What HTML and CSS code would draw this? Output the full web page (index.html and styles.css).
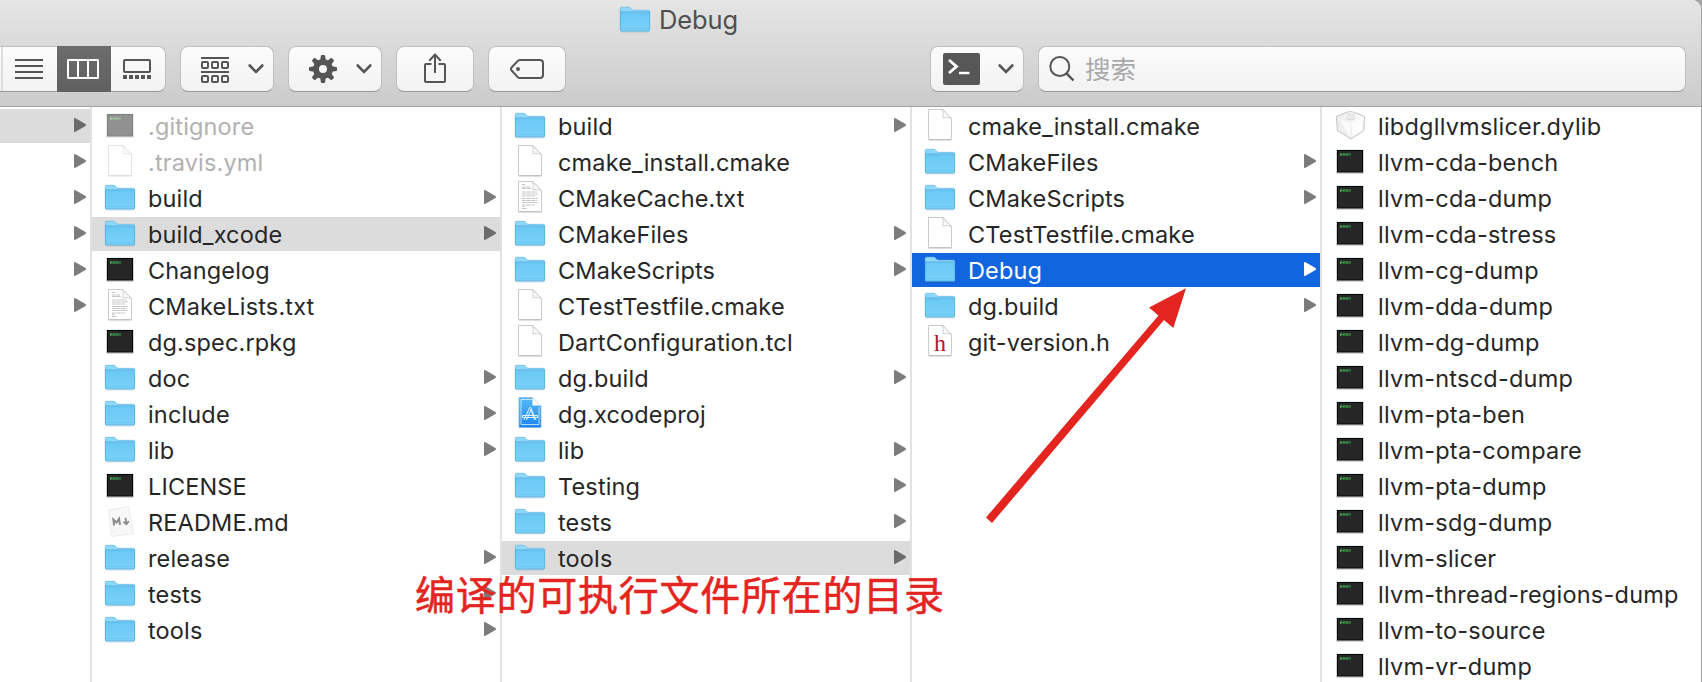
FILE: index.html
```html
<!DOCTYPE html>
<html lang="zh-CN">
<head>
<meta charset="utf-8">
<title>Debug</title>
<link rel="stylesheet" href="styles.css">
</head>
<body>
<svg class="defs" width="0" height="0" aria-hidden="true">
  <defs>
    <linearGradient id="gFolder" x1="0" y1="0" x2="0" y2="1"><stop offset="0" stop-color="#69c7f5"/><stop offset="1" stop-color="#7bd2f9"/></linearGradient>
    <linearGradient id="gXcode" x1="0" y1="0" x2="0" y2="1"><stop offset="0" stop-color="#55bbf5"/><stop offset="1" stop-color="#1b82f2"/></linearGradient>
    <linearGradient id="gCube" x1="0" y1="0" x2="1" y2="0"><stop offset="0" stop-color="#ececec"/><stop offset="1" stop-color="#fafafa"/></linearGradient>
  </defs>
  <symbol id="folder" viewBox="0 0 32 34">
    <path d="M2 28.500h28v1H2z" fill="#000" opacity=".13"/>
    <path d="M1 6q0-2 1.500-2h7.500q1 0 1.700 1.200T14 7h15.500q1.500 0 1.500 1.500V27H1z" fill="#8fd7fb"/>
    <path d="M1.300 9V5.500q0-1.200 1.200-1.200h7.500q.8 0 1.600 1.200T14 7.300h16" fill="none" stroke="#72bde3" stroke-width=".7"/>
    <path d="M1 9h30v18.300q0 1-1 1H2q-1 0-1-1z" fill="url(#gFolder)"/>
    <path d="M1.500 8.900h29M1.350 8v19q0 1 1 1h27.300q1 0 1-1V8" fill="none" stroke="#57aedb" stroke-width=".8"/>
    <path d="M2 25.500h28" stroke="#68bde8" stroke-width=".5"/>
  </symbol>
  <symbol id="exec" viewBox="0 0 32 34">
    <path d="M2 5h28v24H2z" fill="#000" opacity=".17"/>
    <path d="M2.500 4.600h27v.8h-27z" fill="#b9d9e3"/>
    <path d="M3 5h26v22.500H3z" fill="#060606"/>
    <path d="M4 6h24v20.500H4z" fill="#262626"/>
    <path d="M6 9.500h2.500M9.300 9.500h2.200M12.300 9.500h2.200M15.500 9.500h1" stroke="#43b052" stroke-width="2.400" stroke-dasharray="1.100 .3"/>
  </symbol>
  <symbol id="doc" viewBox="0 0 32 34">
    <path d="M4.500.5H19l8.500 9V30q0 .7-.7.700H5.200q-.7 0-.7-.7z" fill="#fff" stroke="#c5c5c5" stroke-width=".9"/>
    <path d="M4.500 30.900h23" stroke="#b0b0b0" stroke-width=".8"/>
    <path d="M18.500.7q1.500 3 .3 8 4-.6 8.400.6z" fill="#fafafa" stroke="#c8c8c8" stroke-width=".8"/>
  </symbol>
  <symbol id="txt" viewBox="0 0 32 34">
    <use href="#doc"/>
    <path d="M8 3.500h3.500M8 6h8M8 7.500h9M8 11h15M8 13h16M8 15h13M8 17.500h16M8 19.500h15M8 21.500h16M8 24h13M8 25.500h2.500M8 27.500h5" stroke="#bdbdbd" stroke-width=".9" stroke-dasharray="3 .3 1.500 .3"/>
  </symbol>
  <symbol id="xcode" viewBox="0 0 32 34">
    <path d="M5 .5h13.500l8.500 8.500v21.500H5z" fill="url(#gXcode)" stroke="#84b7dc" stroke-width=".8"/>
    <path d="M7 2.500h11M7 2.500v25h18V10" fill="none" stroke="#d9f1ff" stroke-width=".8"/>
    <path d="M18.500.5V8.500H27z" fill="#f5f9fc" stroke="#c8d4dc" stroke-width=".5"/>
    <path d="M10 23 15.700 10.500h1L22 23M12.500 23l4.500-10.500L20.500 23M8.500 18.500h15v2h-15z" fill="none" stroke="#e2f5ff" stroke-width="1"/>
  </symbol>
  <symbol id="md" viewBox="0 0 32 34">
    <path d="M4.500 5 24.500 1.500 29.500 28.500 7.500 31.500z" fill="#f8f8f8" stroke="#e9e9e9" stroke-width=".8"/>
    <path d="M10.200 20.500 9.400 14.500l3.300 3 2.400-3.700.9 6" fill="none" stroke="#8a8a8a" stroke-width="2"/>
    <path d="M21.500 12.800l.7 5M19.300 16.800l3.200 2.500 2.300-3.300" fill="none" stroke="#8a8a8a" stroke-width="1.800"/>
  </symbol>
  <symbol id="dylib" viewBox="0 0 32 34">
    <path d="M2.300 7.500 12 3.500q4-1.600 8.500 0l10 4-.7 14.200L17 30 3.500 21.500z" fill="url(#gCube)" stroke="#bcbcbc" stroke-width=".9"/>
    <path d="M5 10 16.500 14.500 28 10v10.500L16.800 28z" fill="#fff" opacity=".75"/>
    <path d="M17 15v13" stroke="#e6e6e6" stroke-width=".9"/>
    <path d="M12.500 6v4q4 2.200 8.500 0V6" fill="#ececec"/>
    <path d="M12.500 9.800q4 2.200 8.500 0" fill="none" stroke="#cfcfcf" stroke-width=".8"/>
    <ellipse cx="16.700" cy="4.300" rx="4.300" ry="1.500" fill="#f4f4f4" stroke="#c9c9c9" stroke-width=".6"/>
  </symbol>
  <symbol id="arrow" viewBox="0 0 12 14"><path d="M0 1Q0-.3 1.500.3L11.500 6q1 .9 0 1.900L1.500 13.700Q0 14.300 0 13z"/></symbol>
  <symbol id="chev" viewBox="0 0 16 10"><path d="M1.700 1.500 8 8l6.300-6.500" fill="none" stroke="#555" stroke-width="2.600" stroke-linecap="round"/></symbol>
</svg>

<div class="window">
  <header class="chrome">
    <div class="title"><svg class="title-icon"><use href="#folder"/></svg><span class="title-text">Debug</span></div>
    <div class="toolbar">
      <div class="views">
        <div class="seg seg-cut"></div>
        <div class="seg"><svg width="54" height="44" viewBox="0 0 54 44"><path d="M12 13h28M12 19h28M12 25h28M12 31h28" stroke="#555" stroke-width="2"/></svg></div>
        <div class="seg seg-on"><svg width="54" height="46" viewBox="0 0 54 46"><path d="M11 14h30v18H11zM21 14v18M31 14v18" fill="none" stroke="#fff" stroke-width="2" stroke-linejoin="round"/></svg></div>
        <div class="seg"><svg width="54" height="44" viewBox="0 0 54 44"><rect x="13" y="13" width="26" height="12" rx="1" fill="none" stroke="#555" stroke-width="2"/><path d="M12 30h28" stroke="#555" stroke-width="4" stroke-dasharray="4 2"/></svg></div>
      </div>
      <div class="btn drop"><svg class="raised" width="28" height="26" viewBox="0 0 28 26" fill="none" stroke="#555" stroke-width="2"><path d="M0 1h28M0 15h28"/><rect x="1" y="5" width="6" height="6" rx="1"/><rect x="11" y="5" width="6" height="6" rx="1"/><rect x="21" y="5" width="6" height="6" rx="1"/><rect x="1" y="19" width="6" height="6" rx="1"/><rect x="11" y="19" width="6" height="6" rx="1"/><rect x="21" y="19" width="6" height="6" rx="1"/></svg><svg class="chev"><use href="#chev"/></svg></div>
      <div class="btn drop"><svg width="28" height="28" viewBox="-14 -14 28 28"><circle r="7" fill="none" stroke="#555" stroke-width="6"/><g fill="#555"><path id="tooth" d="M-2.800-9-2.100-13.300q.2-.7.900-.7h2.400q.7 0 .9.700L2.800-9z"/><use href="#tooth" transform="rotate(45)"/><use href="#tooth" transform="rotate(90)"/><use href="#tooth" transform="rotate(135)"/><use href="#tooth" transform="rotate(180)"/><use href="#tooth" transform="rotate(225)"/><use href="#tooth" transform="rotate(270)"/><use href="#tooth" transform="rotate(315)"/></g></svg><svg class="chev"><use href="#chev"/></svg></div>
      <div class="btn single"><svg class="raised" width="22" height="32" viewBox="0 0 22 32" fill="none" stroke="#555" stroke-width="2"><path d="M7.500 12H2q-1 0-1 1v16q0 1 1 1h18q1 0 1-1V13q0-1-1-1h-5.500M11 21V2.500M5.300 8.700 11 2.500l5.700 6.200"/></svg></div>
      <div class="btn single"><svg width="34" height="20" viewBox="0 0 34 20"><path d="M10 1h20q3 0 3 3v12q0 3-3 3H10q-1.500 0-2.500-1.200L1.600 11.500q-1.200-1.500 0-3L7.500 2.200Q8.500 1 10 1z" fill="none" stroke="#555" stroke-width="2"/><circle cx="8" cy="10" r="2" fill="#555"/></svg></div>
      <div class="btn term"><svg width="37" height="32" viewBox="0 0 37 32"><rect width="37" height="32" rx="2" fill="#575757"/><path d="M6 7l7.500 6.500L6 20" fill="none" stroke="#fff" stroke-width="2.800"/><path d="M16 20h10.500" stroke="#fff" stroke-width="2.400"/></svg><svg class="chev"><use href="#chev"/></svg></div>
      <div class="search"><svg width="26" height="26" viewBox="0 0 26 26" fill="none" stroke="#555"><circle cx="10.800" cy="10.500" r="9.500" stroke-width="2"/><path d="M17.500 17.300 24.500 24.500" stroke-width="2.400"/></svg><span>搜索</span></div>
    </div>
  </header>

  <main class="columns">
    <ul class="col col-first">
      <li class="row sel"><svg class="arr"><use href="#arrow"/></svg></li>
      <li class="row"><svg class="arr"><use href="#arrow"/></svg></li>
      <li class="row"><svg class="arr"><use href="#arrow"/></svg></li>
      <li class="row"><svg class="arr"><use href="#arrow"/></svg></li>
      <li class="row"><svg class="arr"><use href="#arrow"/></svg></li>
      <li class="row"><svg class="arr"><use href="#arrow"/></svg></li>
    </ul>
    <ul class="col">
      <li class="row dim"><svg class="ico"><use href="#exec"/></svg><span class="name">.gitignore</span></li>
      <li class="row dim"><svg class="ico"><use href="#doc"/></svg><span class="name">.travis.yml</span></li>
      <li class="row"><svg class="ico"><use href="#folder"/></svg><span class="name">build</span><svg class="arr"><use href="#arrow"/></svg></li>
      <li class="row sel"><svg class="ico"><use href="#folder"/></svg><span class="name">build_xcode</span><svg class="arr"><use href="#arrow"/></svg></li>
      <li class="row"><svg class="ico"><use href="#exec"/></svg><span class="name">Changelog</span></li>
      <li class="row"><svg class="ico"><use href="#txt"/></svg><span class="name">CMakeLists.txt</span></li>
      <li class="row"><svg class="ico"><use href="#exec"/></svg><span class="name">dg.spec.rpkg</span></li>
      <li class="row"><svg class="ico"><use href="#folder"/></svg><span class="name">doc</span><svg class="arr"><use href="#arrow"/></svg></li>
      <li class="row"><svg class="ico"><use href="#folder"/></svg><span class="name">include</span><svg class="arr"><use href="#arrow"/></svg></li>
      <li class="row"><svg class="ico"><use href="#folder"/></svg><span class="name">lib</span><svg class="arr"><use href="#arrow"/></svg></li>
      <li class="row"><svg class="ico"><use href="#exec"/></svg><span class="name">LICENSE</span></li>
      <li class="row"><svg class="ico"><use href="#md"/></svg><span class="name">README.md</span></li>
      <li class="row"><svg class="ico"><use href="#folder"/></svg><span class="name">release</span><svg class="arr"><use href="#arrow"/></svg></li>
      <li class="row"><svg class="ico"><use href="#folder"/></svg><span class="name">tests</span><svg class="arr"><use href="#arrow"/></svg></li>
      <li class="row"><svg class="ico"><use href="#folder"/></svg><span class="name">tools</span><svg class="arr"><use href="#arrow"/></svg></li>
    </ul>
    <ul class="col">
      <li class="row"><svg class="ico"><use href="#folder"/></svg><span class="name">build</span><svg class="arr"><use href="#arrow"/></svg></li>
      <li class="row"><svg class="ico"><use href="#doc"/></svg><span class="name">cmake_install.cmake</span></li>
      <li class="row"><svg class="ico"><use href="#txt"/></svg><span class="name">CMakeCache.txt</span></li>
      <li class="row"><svg class="ico"><use href="#folder"/></svg><span class="name">CMakeFiles</span><svg class="arr"><use href="#arrow"/></svg></li>
      <li class="row"><svg class="ico"><use href="#folder"/></svg><span class="name">CMakeScripts</span><svg class="arr"><use href="#arrow"/></svg></li>
      <li class="row"><svg class="ico"><use href="#doc"/></svg><span class="name">CTestTestfile.cmake</span></li>
      <li class="row"><svg class="ico"><use href="#doc"/></svg><span class="name">DartConfiguration.tcl</span></li>
      <li class="row"><svg class="ico"><use href="#folder"/></svg><span class="name">dg.build</span><svg class="arr"><use href="#arrow"/></svg></li>
      <li class="row"><svg class="ico"><use href="#xcode"/></svg><span class="name">dg.xcodeproj</span></li>
      <li class="row"><svg class="ico"><use href="#folder"/></svg><span class="name">lib</span><svg class="arr"><use href="#arrow"/></svg></li>
      <li class="row"><svg class="ico"><use href="#folder"/></svg><span class="name">Testing</span><svg class="arr"><use href="#arrow"/></svg></li>
      <li class="row"><svg class="ico"><use href="#folder"/></svg><span class="name">tests</span><svg class="arr"><use href="#arrow"/></svg></li>
      <li class="row sel"><svg class="ico"><use href="#folder"/></svg><span class="name">tools</span><svg class="arr"><use href="#arrow"/></svg></li>
    </ul>
    <ul class="col">
      <li class="row"><svg class="ico"><use href="#doc"/></svg><span class="name">cmake_install.cmake</span></li>
      <li class="row"><svg class="ico"><use href="#folder"/></svg><span class="name">CMakeFiles</span><svg class="arr"><use href="#arrow"/></svg></li>
      <li class="row"><svg class="ico"><use href="#folder"/></svg><span class="name">CMakeScripts</span><svg class="arr"><use href="#arrow"/></svg></li>
      <li class="row"><svg class="ico"><use href="#doc"/></svg><span class="name">CTestTestfile.cmake</span></li>
      <li class="row active"><svg class="ico"><use href="#folder"/></svg><span class="name">Debug</span><svg class="arr"><use href="#arrow"/></svg></li>
      <li class="row"><svg class="ico"><use href="#folder"/></svg><span class="name">dg.build</span><svg class="arr"><use href="#arrow"/></svg></li>
      <li class="row"><svg class="ico" viewBox="0 0 32 34"><use href="#doc"/><text x="16" y="26" text-anchor="middle" class="h-glyph">h</text></svg><span class="name">git-version.h</span></li>
    </ul>
    <ul class="col col-last">
      <li class="row"><svg class="ico"><use href="#dylib"/></svg><span class="name">libdgllvmslicer.dylib</span></li>
      <li class="row"><svg class="ico"><use href="#exec"/></svg><span class="name">llvm-cda-bench</span></li>
      <li class="row"><svg class="ico"><use href="#exec"/></svg><span class="name">llvm-cda-dump</span></li>
      <li class="row"><svg class="ico"><use href="#exec"/></svg><span class="name">llvm-cda-stress</span></li>
      <li class="row"><svg class="ico"><use href="#exec"/></svg><span class="name">llvm-cg-dump</span></li>
      <li class="row"><svg class="ico"><use href="#exec"/></svg><span class="name">llvm-dda-dump</span></li>
      <li class="row"><svg class="ico"><use href="#exec"/></svg><span class="name">llvm-dg-dump</span></li>
      <li class="row"><svg class="ico"><use href="#exec"/></svg><span class="name">llvm-ntscd-dump</span></li>
      <li class="row"><svg class="ico"><use href="#exec"/></svg><span class="name">llvm-pta-ben</span></li>
      <li class="row"><svg class="ico"><use href="#exec"/></svg><span class="name">llvm-pta-compare</span></li>
      <li class="row"><svg class="ico"><use href="#exec"/></svg><span class="name">llvm-pta-dump</span></li>
      <li class="row"><svg class="ico"><use href="#exec"/></svg><span class="name">llvm-sdg-dump</span></li>
      <li class="row"><svg class="ico"><use href="#exec"/></svg><span class="name">llvm-slicer</span></li>
      <li class="row"><svg class="ico"><use href="#exec"/></svg><span class="name">llvm-thread-regions-dump</span></li>
      <li class="row"><svg class="ico"><use href="#exec"/></svg><span class="name">llvm-to-source</span></li>
      <li class="row"><svg class="ico"><use href="#exec"/></svg><span class="name">llvm-vr-dump</span></li>
    </ul>
  </main>
</div>

<svg class="pointer" width="202" height="238" viewBox="0 0 202 238"><path d="M201 .3 164 19.500l9.500 8L1 229.500l6 5.500L179 32l9.300 8z" fill="#e4251f"/></svg>
<div class="note">编译的可执行文件所在的目录</div>
</body>
</html>
```
FILE: styles.css
```css
* { box-sizing: border-box; }
body {
  margin: 0;
  width: 1702px;
  height: 682px;
  overflow: hidden;
  position: relative;
  background: #a4a4a4;
  font-family: Inter, "Noto Sans CJK SC", sans-serif;
  color: #262626;
}
.defs { position: absolute; }
svg { display: block; flex: none; }

.window {
  width: 1701px;
  height: 682px;
  display: flex;
  flex-direction: column;
  background: #fff;
  border-top-right-radius: 9px;
  overflow: hidden;
}
.chrome {
  height: 107px;
  flex: none;
  background: linear-gradient(#e5e5e5, #cbcbcb);
  border-bottom: 1px solid #a3a3a3;
}
.title {
  height: 46px;
  padding: 3px 0 0 619px;
  display: flex;
  align-items: flex-start;
}
.title-icon { width: 32px; height: 34px; }
.title-text {
  margin-left: 8px;
  font-size: 25.5px;
  line-height: 34px;
  letter-spacing: -0.1px;
  color: #505050;
}

.toolbar {
  display: flex;
  gap: 14px;
  padding-right: 15px;
  height: 46px;
}
.views, .btn, .search {
  background: linear-gradient(#fcfcfc, #f2f2f2);
  border: 1px solid #c0c0c0;
  border-bottom-color: #999;
  border-radius: 8px;
  display: flex;
  align-items: center;
}
.views {
  width: 166px;
  border-left: 0;
  border-top-left-radius: 0;
  border-bottom-left-radius: 0;
}
.seg { width: 54px; flex: none; }
.seg-cut { width: 3px; height: 44px; border-right: 2px solid #ddd; }
.seg-on { height: 46px; background: linear-gradient(#6c6c6c, #606060); }
.drop { width: 94px; padding: 0 9px 0 20px; justify-content: space-between; }
.single { width: 78px; justify-content: center; }
.term { width: 94px; margin-left: auto; padding: 0 9px 0 12px; justify-content: space-between; }
.chev { width: 16px; height: 10px; }
.raised { margin-bottom: 2px; }
.drop .raised { margin-bottom: 0; margin-top: 2px; }
.search {
  width: 648px;
  padding-left: 10px;
  font-size: 25.5px;
  color: #a9a9a9;
}
.search span { margin-left: 10px; line-height: 40px; padding-top: 2px; }

.columns { display: flex; flex: 1; min-height: 0; }
.col {
  list-style: none;
  margin: 0;
  padding: 2px 0 0;
  width: 410px;
  flex: none;
  border-right: 2px solid #e2e2e2;
  display: flex;
  flex-direction: column;
  gap: 2px;
}
.col-first { width: 92px; }
.col-last { width: 379px; border-right: 0; }
.row {
  height: 34px;
  flex: none;
  display: flex;
  align-items: center;
  padding: 0 4px 0 12px;
}
.ico { width: 32px; height: 34px; }
.name {
  margin-left: 12px;
  font-size: 23.5px;
  line-height: 34px;
  letter-spacing: 0.15px;
  padding-top: 2px;
  white-space: nowrap;
}
.col-last .name { letter-spacing: 0.23px; }
.arr { width: 12px; height: 14px; margin-left: auto; margin-bottom: 2px; fill: #7c7c7c; }
.sel { background: #dcdcdc; }
.sel .arr { fill: #6b6b6b; }
.active { background: #1166df; color: #fff; }
.active .arr { fill: #fff; }
.dim .ico { opacity: .5; }
.dim .name { color: #b1b1b1; }
.h-glyph { font-family: "Liberation Serif", serif; font-size: 24px; fill: #b0152f; }

/* annotations over the window */
.pointer { position: absolute; left: 985px; top: 288px; }
.note {
  position: absolute;
  left: 415px;
  top: 573px;
  font-family: "Noto Sans CJK SC", sans-serif;
  font-size: 40px;
  line-height: 40px;
  letter-spacing: 0.75px;
  font-weight: 400;
  -webkit-text-stroke: 0.5px #e4251f;
  color: #e4251f;
  white-space: nowrap;
}
```
